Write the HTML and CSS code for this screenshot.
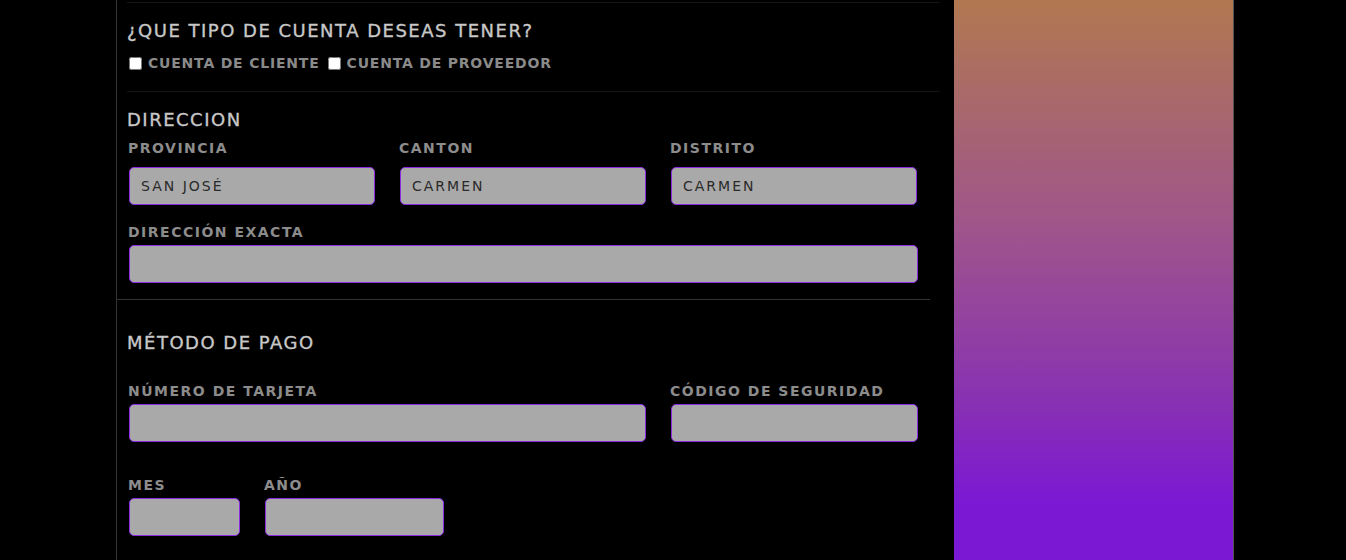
FILE: index.html
```html
<!DOCTYPE html>
<html lang="es">
<head>
<meta charset="utf-8">
<title>Registro</title>
<link rel="stylesheet" href="styles.css">
</head>
<body>
<div class="page">
  <div class="form-col">
    <section class="block block-type">
      <h2 class="title">¿Que tipo de cuenta deseas tener?</h2>
      <div class="checks">
        <label class="check"><input type="checkbox"> Cuenta de cliente</label>
        <label class="check"><input type="checkbox"> Cuenta de proveedor</label>
      </div>
    </section>
    <section class="block block-addr">
      <h2 class="title">Direccion</h2>
      <div class="row row-3">
        <div class="field"><label class="lbl">Provincia</label><input class="inp" type="text" value="San José"></div>
        <div class="field"><label class="lbl">Canton</label><input class="inp" type="text" value="Carmen"></div>
        <div class="field"><label class="lbl">Distrito</label><input class="inp" type="text" value="Carmen"></div>
      </div>
      <div class="field field-full"><label class="lbl">Dirección exacta</label><input class="inp" type="text"></div>
    </section>
    <hr class="sep">
    <section class="block block-pay">
      <h2 class="title">Método de pago</h2>
      <div class="row row-card">
        <div class="field field-card"><label class="lbl">Número de tarjeta</label><input class="inp" type="text"></div>
        <div class="field field-cvv"><label class="lbl">Código de seguridad</label><input class="inp" type="text"></div>
      </div>
      <div class="row row-date">
        <div class="field field-mes"><label class="lbl">Mes</label><input class="inp" type="text"></div>
        <div class="field field-ano"><label class="lbl">Año</label><input class="inp" type="text"></div>
      </div>
    </section>
  </div>
  <div class="side"></div>
</div>
</body>
</html>
```
FILE: styles.css
```css
* { box-sizing: border-box; }
html, body { margin: 0; padding: 0; background: #000; height: 100%; }
body { font-family: "DejaVu Sans", sans-serif; text-transform: uppercase; overflow: hidden; }

.page { display: flex; height: 560px; padding-left: 116px; }

.form-col {
  width: 838px;
  border-left: 1px solid #333;
  height: 100%;
}

.block { margin: 0 14px 0 10px; }

.title {
  margin: 0;
  font-size: 18px;
  font-weight: normal;
  letter-spacing: 1.5px;
  color: #c8c8c8;
  line-height: 22px;
  -webkit-text-stroke: 0.35px #c8c8c8;
}

.block-type { border-top: 1px solid #151515; margin-top: 2px; padding-top: 17px; height: 89px; }
.checks { display: flex; gap: 6px; margin-top: 13px; align-items: center; }
.check { display: flex; align-items: center; gap: 4px; font-size: 14px; font-weight: bold; letter-spacing: 0.8px; color: #8a8a8a; }
.check input { margin: 0 2px; width: 13px; height: 13px; }

.block-addr { border-top: 1px solid #151515; padding-top: 17px; }

.row { display: flex; gap: 24px; }
.row-3 { margin-top: 9px; padding-left: 1px; }
.row-3 .field { width: 247px; }
.row-3 .lbl { margin-bottom: 11px; }

.field { display: flex; flex-direction: column; }
.lbl {
  font-size: 14px;
  font-weight: bold;
  letter-spacing: 1.5px;
  color: #8c8c8c;
  line-height: 16px;
  margin-bottom: 5px;
}
.inp {
  margin-left: 1px;
  height: 38px;
  background: #a9a9a9;
  border: 1px solid #8a2be2;
  border-radius: 5px;
  padding: 0 11px;
  font-family: "DejaVu Sans", sans-serif;
  font-size: 14px;
  letter-spacing: 2px;
  text-transform: uppercase;
  color: #2a2a2a;
  width: calc(100% - 1px);
}
.field-full { margin-top: 19px; padding-left: 1px; width: 791px; }

.sep { border: 0; border-top: 1px solid #333; margin: 16px 24px 0 0; }

.block-pay { padding-top: 32px; }
.row-card { margin-top: 29px; padding-left: 1px; }
.field-card { width: 518px; }
.field-cvv { width: 248px; }
.row-date { margin-top: 35px; padding-left: 1px; }
.field-mes { width: 112px; }
.field-ano { width: 180px; }

.side {
  width: 280px;
  height: 100%;
  border-right: 1px solid #555;
  background: linear-gradient(to bottom, #b07850 0%, #a0558a 40%, #8a33b0 70%, #7b18d4 90%, #7b18d4 100%);
}
```
